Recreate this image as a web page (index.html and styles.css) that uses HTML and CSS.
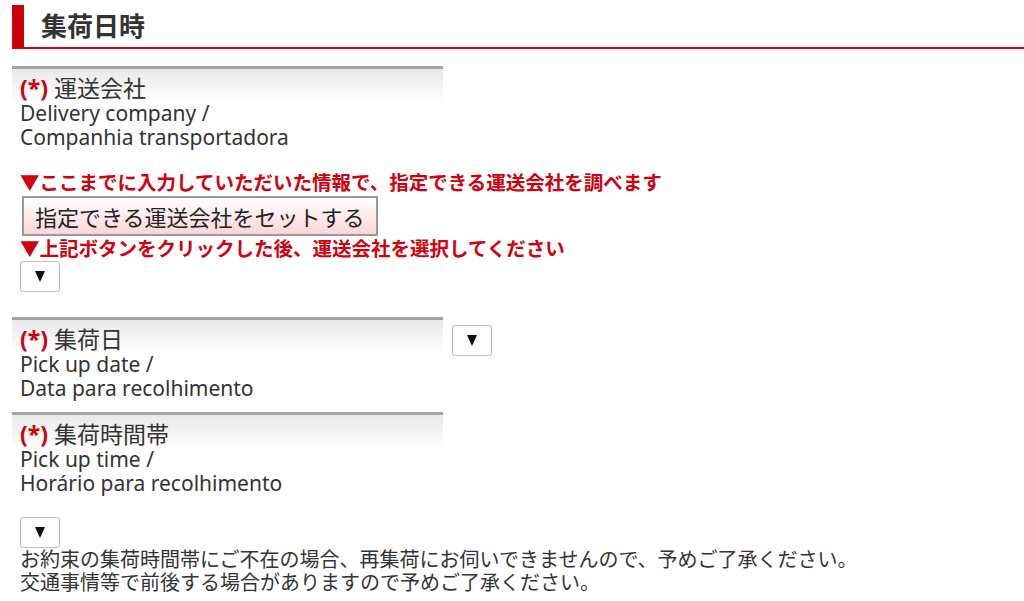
FILE: index.html
```html
<!DOCTYPE html>
<html lang="ja">
<head>
    <meta charset="UTF-8">
    <meta name="viewport" content="width=device-width, initial-scale=1.0">
    <title>集荷日時</title>
    <link rel="stylesheet" href="styles.css">
</head>
<body>
    <div class="page">
        <h2 class="section-title">集荷日時</h2>

        <!-- 運送会社 -->
        <div class="field stack">
            <div class="label">
                <div class="label-ja"><span class="req">(*)</span> 運送会社</div>
                <div class="label-en">Delivery company /<br>Companhia transportadora</div>
            </div>
            <div class="value">
                <p class="notice">▼ここまでに入力していただいた情報で、指定できる運送会社を調べます</p>
                <button class="btn-set" type="button">指定できる運送会社をセットする</button>
                <p class="notice">▼上記ボタンをクリックした後、運送会社を選択してください</p>
                <span class="select">
                    <svg width="10" height="11" viewBox="0 0 10 11"><path d="M0 0 H10 L5 11 Z" fill="#111"/></svg>
                </span>
            </div>
        </div>

        <!-- 集荷日 -->
        <div class="field inline">
            <div class="label">
                <div class="label-ja"><span class="req">(*)</span> 集荷日</div>
                <div class="label-en">Pick up date /<br>Data para recolhimento</div>
            </div>
            <div class="value">
                <span class="select">
                    <svg width="10" height="11" viewBox="0 0 10 11"><path d="M0 0 H10 L5 11 Z" fill="#111"/></svg>
                </span>
            </div>
        </div>

        <!-- 集荷時間帯 -->
        <div class="field stack">
            <div class="label">
                <div class="label-ja"><span class="req">(*)</span> 集荷時間帯</div>
                <div class="label-en">Pick up time /<br>Horário para recolhimento</div>
            </div>
            <div class="value">
                <span class="select">
                    <svg width="10" height="11" viewBox="0 0 10 11"><path d="M0 0 H10 L5 11 Z" fill="#111"/></svg>
                </span>
                <p class="note">お約束の集荷時間帯にご不在の場合、再集荷にお伺いできませんので、予めご了承ください。<br>交通事情等で前後する場合がありますので予めご了承ください。</p>
            </div>
        </div>
    </div>
</body>
</html>
```

FILE: styles.css
```css
body {
    margin: 0;
    background: #fff;
    color: #333;
    font-family: "Noto Sans", "Noto Sans CJK JP", sans-serif;
    font-size: 20px;
}
.page {
    padding-left: 12px;
}
.section-title {
    margin: 5px 0 0;
    height: 42px;
    line-height: 42px;
    padding-left: 17px;
    border-left: 12px solid #c8000a;
    border-bottom: 2px solid #d9000f;
    font-size: 26px;
    font-weight: bold;
    color: #333;
}
.field {
    display: flex;
}
.field.stack {
    flex-direction: column;
}
.field.inline {
    gap: 9px;
}
.field:first-of-type {
    margin-top: 17px;
}
.label {
    width: 415px;
    padding: 7px 8px 12px;
    border-top: 3px solid #a3a3a3;
    background: linear-gradient(#e9e9e9, #fff 34px);
}
.label-ja {
    font-size: 23px;
    line-height: 25px;
}
.label-en {
    font-size: 21px;
    line-height: 24px;
}
.req {
    color: #d0000d;
    font-weight: bold;
}
.value {
    padding-left: 8px;
}
.field.stack .value {
    padding-top: 10px;
}
.field.inline .value {
    padding-top: 8px;
    padding-left: 0;
}
.notice {
    margin: 0;
    color: #d0000d;
    font-weight: bold;
    font-size: 19.5px;
    line-height: 24px;
}
.btn-set {
    display: block;
    margin: 1px 0 1px 2px;
    height: 40px;
    padding: 0 11px;
    border: 2px solid #9a9a9a;
    background: linear-gradient(#fff, #fbd5d7);
    font-family: "Noto Sans", "Noto Sans CJK JP", sans-serif;
    font-size: 22px;
    color: #222;
}
.select {
    display: flex;
    align-items: center;
    justify-content: center;
    width: 38px;
    height: 29px;
    border: 1px solid #bcbcbc;
    border-radius: 3px;
    background: #fff;
    margin-bottom: 25px;
}
.field.inline .select {
    margin-bottom: 0;
}
.field.stack:last-child .select {
    margin-bottom: 0;
}
.note {
    margin: 0;
    line-height: 23px;
}
```
